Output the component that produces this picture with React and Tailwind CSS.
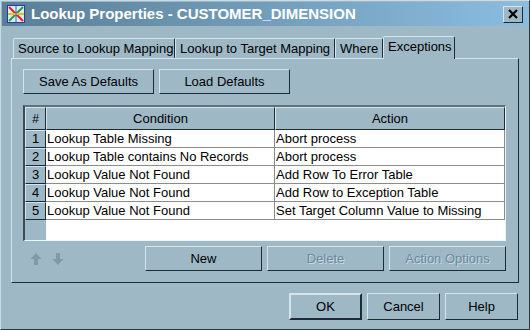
const rows = [
  { n: 1, condition: "Lookup Table Missing", action: "Abort process" },
  { n: 2, condition: "Lookup Table contains No Records", action: "Abort process" },
  { n: 3, condition: "Lookup Value Not Found", action: "Add Row To Error Table" },
  { n: 4, condition: "Lookup Value Not Found", action: "Add Row to Exception Table" },
  { n: 5, condition: "Lookup Value Not Found", action: "Set Target Column Value to Missing" },
];

const raised =
  "border border-t-[#d6e4ec] border-l-[#d6e4ec] border-b-[#1c2b35] border-r-[#1c2b35] bg-[#9eb8c6]";

function Button({ children, disabled, className = "" }) {
  return (
    <div
      className={`flex items-center justify-center h-[25px] ${raised} ${
        disabled ? "text-[#6d8a9a] [text-shadow:1px_1px_0_#c8dae4]" : "text-black"
      } ${className}`}
    >
      {children}
    </div>
  );
}

function Tab({ label, active, className = "" }) {
  return (
    <div
      className={`flex items-center border-t border-l border-r border-t-[#d6e4ec] border-l-[#d6e4ec] border-r-[#1c2b35] rounded-t-[2px] px-[4px] text-[13px] whitespace-nowrap ${
        active ? "h-[23px] pb-[3px] -mb-px bg-[#9eb8c6] relative z-10" : "h-[20px]"
      } ${className}`}
    >
      {label}
    </div>
  );
}

function AppIcon() {
  return (
    <svg width="18" height="18" viewBox="0 0 18 18">
      <rect x="0.5" y="0.5" width="17" height="17" fill="#dfe8f0" stroke="#2040a0" />
      <line x1="2" y1="2" x2="16" y2="16" stroke="#e02020" strokeWidth="2" />
      <line x1="16" y1="2" x2="2" y2="16" stroke="#20a040" strokeWidth="2" />
      <line x1="1" y1="9" x2="17" y2="9" stroke="#e8c020" strokeWidth="2" />
      <line x1="9" y1="1" x2="9" y2="17" stroke="#3060d0" strokeWidth="1" />
    </svg>
  );
}

function Arrow({ down }) {
  return (
    <svg width="12" height="12" viewBox="0 0 12 12">
      <path
        d={down ? "M4 0h4v6h3.5L6 12 0.5 6H4z" : "M4 12h4V6h3.5L6 0 0.5 6H4z"}
        fill="#8299a6"
      />
    </svg>
  );
}

export default function App() {
  return (
    <div className="w-[530px] h-[330px] bg-[#9eb8c6] border border-l-[#c9dbe6] border-t-[#c9dbe6] border-r-[#2a3a44] border-b-[#2a3a44] font-['Liberation_Sans',Arial,sans-serif] text-[12px] text-black flex flex-col overflow-hidden">
      <div className="mx-[1px] mt-[1px] h-[24px] flex items-center bg-gradient-to-r from-[#5a7f96] to-[#8bbde0]">
        <div className="ml-[5px] mr-[6px]">
          <AppIcon />
        </div>
        <span className="text-white font-bold text-[15px]">
          Lookup Properties - CUSTOMER_DIMENSION
        </span>
        <div className={`ml-auto mr-[5px] w-[20px] h-[17px] flex items-center justify-center ${raised}`}>
          <svg width="10" height="10" viewBox="0 0 10 10">
            <path d="M1 1l8 8M9 1L1 9" stroke="#000" strokeWidth="2.2" />
          </svg>
        </div>
      </div>

      <div className="mt-[10px] ml-[12px] flex items-end h-[22px]">
        <Tab label="Source to Lookup Mapping" className="w-[162px]" />
        <Tab label="Lookup to Target Mapping" className="w-[160px]" />
        <Tab label="Where" className="w-[48px]" />
        <Tab label="Exceptions" active className="w-[72px]" />
      </div>

      <div className="ml-[10px] w-[508px] h-[225px] border border-t-[#d6e4ec] border-l-[#d6e4ec] border-r-[#1c2b35] border-b-[#1c2b35] flex flex-col px-[11px]">
        <div className="mt-[10px] flex gap-[5px]">
          <Button className="w-[131px] text-[13px]">Save As Defaults</Button>
          <Button className="w-[131px] text-[13px]">Load Defaults</Button>
        </div>

        <div className="mt-[11px] w-[483px] h-[136px] border-t-2 border-l-2 border-t-[#5e727e] border-l-[#3a4a54] border-r border-b border-r-[#e8f4fa] border-b-[#e8f8fc] bg-white flex flex-col">
          <div className="flex h-[23px]">
            <div className={`w-[21px] flex items-center justify-center ${raised}`}>#</div>
            <div className={`w-[229px] flex items-center justify-center text-[13px] ${raised}`}>Condition</div>
            <div className={`w-[230px] flex items-center justify-center text-[13px] ${raised}`}>Action</div>
          </div>
          <div className="flex flex-1">
            <div className="w-[21px] flex flex-col bg-[#9eb8c6]">
              {rows.map((r) => (
                <div key={r.n} className={`h-[18px] flex items-center justify-center text-[13px] ${raised}`}>
                  {r.n}
                </div>
              ))}
            </div>
            <div className="flex flex-col">
              {rows.map((r) => (
                <div key={r.n} className="flex h-[18px] text-[13px]">
                  <div className="w-[229px] border-b border-r border-[#8c8c8c] pl-[1px] leading-[17px] whitespace-nowrap">
                    {r.condition}
                  </div>
                  <div className="w-[230px] border-b border-r border-[#8c8c8c] pl-[1px] leading-[17px] whitespace-nowrap">
                    {r.action}
                  </div>
                </div>
              ))}
            </div>
          </div>
        </div>

        <div className="mt-[5px] flex items-center">
          <div className="ml-[7px] flex gap-[10px]">
            <Arrow />
            <Arrow down />
          </div>
          <div className="ml-auto mr-[1px] flex gap-[5px]">
            <Button className="w-[117px] text-[13px]">New</Button>
            <Button disabled className="w-[117px] text-[13px]">Delete</Button>
            <Button disabled className="w-[117px] text-[13px]">Action Options</Button>
          </div>
        </div>
      </div>

      <div className="mt-[10px] mr-[11px] flex justify-end gap-[5px]">
        <Button className="w-[73px] h-[27px] text-[13px] border-2 border-t-[#0d1418] border-l-[#0d1418] border-r-[#0d1418] border-b-[#0d1418]">
          OK
        </Button>
        <Button className="w-[73px] h-[27px] text-[13px]">Cancel</Button>
        <Button className="w-[73px] h-[27px] text-[13px]">Help</Button>
      </div>
    </div>
  );
}
